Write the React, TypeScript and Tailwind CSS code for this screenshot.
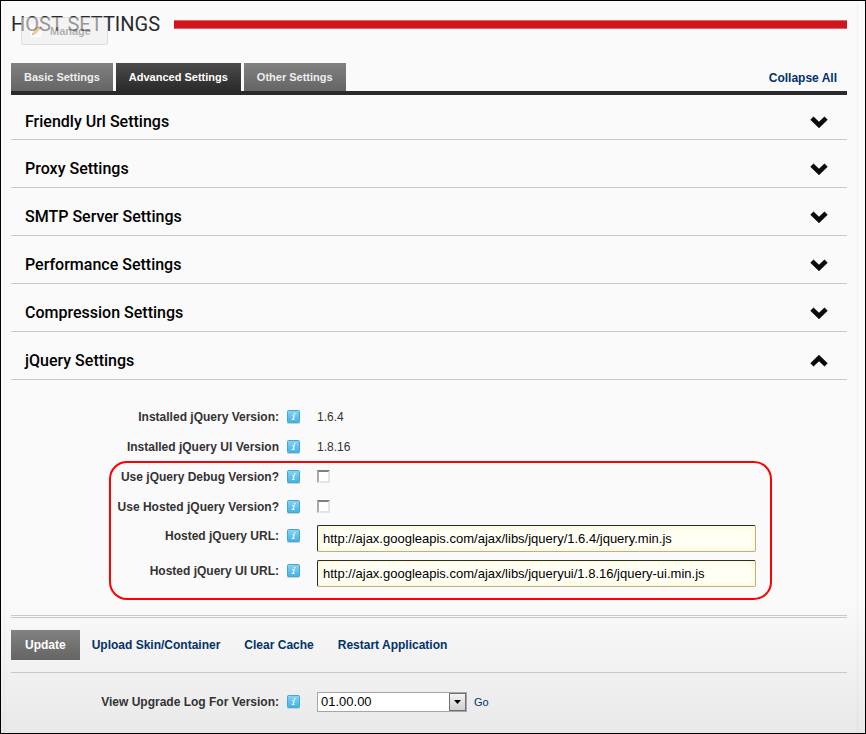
import React, { useState } from "react";

const sections = [
  "Friendly Url Settings",
  "Proxy Settings",
  "SMTP Server Settings",
  "Performance Settings",
  "Compression Settings",
  "jQuery Settings",
];

const tabs = ["Basic Settings", "Advanced Settings", "Other Settings"];

function Chevron({ up }: { up: boolean }) {
  return (
    <svg width="18" height="12" viewBox="0 0 18 12" className={up ? "rotate-180" : ""} aria-hidden="true">
      <path d="M1.9 2.2 9 9l7.100-6.800" fill="none" stroke="#0a0a0a" strokeWidth="4.600" />
    </svg>
  );
}

function InfoIcon() {
  return (
    <svg width="13" height="14" viewBox="0 0 13 14" className="shrink-0" aria-hidden="true">
      <defs>
        <linearGradient id="info" x1="0" y1="0" x2="0" y2="1">
          <stop offset="0" stopColor="#8bd3f2" />
          <stop offset="0.500" stopColor="#62c3ee" />
          <stop offset="1" stopColor="#43b3e6" />
        </linearGradient>
      </defs>
      <rect x="0" y="12" width="13" height="2" rx="1" fill="#c9d3d8" />
      <rect x="0.500" y="0.500" width="12" height="12" rx="1" fill="url(#info)" stroke="#48a5d3" />
      <path d="M7 3h1.600l-.3 1.400H6.700zM5.200 5.200h2.700L7 9h.8l-.2 1H4.600l.2-1h.7l.7-2.900H5z" fill="#fff" opacity=".85" />
    </svg>
  );
}

function Field({
  label,
  id,
  tall,
  children,
}: {
  label: string;
  id: string;
  tall?: boolean;
  children: React.ReactNode;
}) {
  return (
    <div className={tall ? "flex h-[27px] items-start" : "flex h-[30px] items-center"}>
      <div className="flex h-[22px] w-[306px] shrink-0 items-center">
        <label htmlFor={id} className="w-[268px] text-right font-bold whitespace-nowrap text-[#333]">
          {label}
        </label>
        <span className="ml-2">
          <InfoIcon />
        </span>
      </div>
      {children}
    </div>
  );
}

const checkClass =
  "mb-[2px] h-[13px] w-[13px] appearance-none border-2 border-t-[#808080] border-l-[#a9a9a9] border-r-[#e3e3ea] border-b-[#e3e3ea] bg-white checked:bg-[#333]";

const textClass =
  "h-[27px] w-[439px] rounded-[2px] border border-t-[#2b2b2b] border-l-[#2b2b2b] border-r-[#b9b084] border-b-[#b9b084] bg-[#fffff5] px-[5px] text-[13px] text-black shadow-[inset_0_0_6px_#fbf3c4] outline-none";

export default function App() {
  const [open, setOpen] = useState("jQuery Settings");
  return (
    <div className="flex min-h-screen flex-col border border-black bg-[linear-gradient(to_top,#e9e9e9,#fafafa_134px)] pr-[7px] pl-[3px] font-['Liberation_Sans',Arial,sans-serif] text-[12px]">
      <main className="grow border-x border-black/3 pr-[10px] pl-[6px]">
        <header className="relative flex h-[46px] items-center gap-[14px]">
          <h1 className="font-[Roboto,sans-serif] text-[20px] whitespace-nowrap text-[#2b2b2b]">HOST SETTINGS</h1>
          <div className="h-[9px] grow border-y border-[#e0646a] bg-[#d0161c]" />
          <button className="absolute top-4 left-[10px] flex h-7 w-[87px] items-center gap-2 rounded-[2px] border border-[#c8c8c8] bg-[#efefef] pl-2 text-[11px] font-bold text-[#777] opacity-55">
            <svg width="12" height="12" viewBox="0 0 12 12" aria-hidden="true">
              <rect width="12" height="12" fill="#fff" />
              <path d="M2 10l1-3 5-6 3 2-5 6z" fill="#e5a94c" />
              <path d="M8 1l3 2-1 1.500-3-2z" fill="#c66" />
              <path d="M2 10l.5-1.500 1 .9z" fill="#333" />
            </svg>
            Manage
          </button>
        </header>

        <nav className="mt-4 flex items-end border-b-4 border-[#2a2a2a]">
          <div className="flex gap-[3px] text-[11px]">
            {tabs.map((tab) => (
              <button
                key={tab}
                className={
                  tab === "Advanced Settings"
                    ? "h-7 bg-linear-to-b from-[#4c4c4c] to-[#2a2a2a] px-[13px] font-bold text-white"
                    : "h-7 bg-linear-to-b from-[#818181] to-[#656565] px-[13px] font-bold text-[#eee]"
                }
              >
                {tab}
              </button>
            ))}
          </div>
          <a href="#collapse" className="mr-[10px] mb-1 ml-auto font-bold text-[#02326b]">
            Collapse All
          </a>
        </nav>

        <div>
          {sections.map((name) => (
            <h2 key={name} className="h-12 border-b border-[#c9c9c9] first:h-[45px]">
              <button
                onClick={() => setOpen(name)}
                className="flex h-full w-full items-center justify-between pt-[10px] pr-[19px] pl-[14px] font-[Roboto,sans-serif] text-[16px] font-medium text-black"
              >
                {name}
                <Chevron up={open === name} />
              </button>
            </h2>
          ))}
        </div>

        <form className="pt-[22px]" onSubmit={(e) => e.preventDefault()}>
          <Field label="Installed jQuery Version:" id="jq">
            <output id="jq" className="text-[#333]">1.6.4</output>
          </Field>
          <Field label="Installed jQuery UI Version" id="jqui">
            <output id="jqui" className="text-[#333]">1.8.16</output>
          </Field>
          <div className="relative">
            <Field label="Use jQuery Debug Version?" id="debug">
              <input id="debug" type="checkbox" className={checkClass} />
            </Field>
            <Field label="Use Hosted jQuery Version?" id="hosted">
              <input id="hosted" type="checkbox" className={checkClass} />
            </Field>
            <div className="flex flex-col gap-2 pt-[3px]">
              <Field label="Hosted jQuery URL:" id="url" tall>
                <input
                  id="url"
                  type="text"
                  className={textClass}
                  defaultValue="http://ajax.googleapis.com/ajax/libs/jquery/1.6.4/jquery.min.js"
                />
              </Field>
              <Field label="Hosted jQuery UI URL:" id="uiurl" tall>
                <input
                  id="uiurl"
                  type="text"
                  className={textClass}
                  defaultValue="http://ajax.googleapis.com/ajax/libs/jqueryui/1.8.16/jquery-ui.min.js"
                />
              </Field>
            </div>
            <div className="pointer-events-none absolute -top-px -bottom-[13px] left-[98px] w-[663px] rounded-[18px] border-2 border-[#f00]" />
          </div>

          <div className="mt-7 flex items-center border-t-[3px] border-b border-t-[#c9c9c9] border-b-[#c9c9c9] py-3 font-bold text-[#02326b] [border-top-style:double]">
            <button className="h-[30px] bg-linear-to-b from-[#818181] to-[#656565] px-[14px] text-white">Update</button>
            <a href="#upload" className="ml-3">Upload Skin/Container</a>
            <a href="#cache" className="ml-6">Clear Cache</a>
            <a href="#restart" className="ml-6">Restart Application</a>
          </div>

          <div className="mt-[14px]">
            <Field label="View Upgrade Log For Version:" id="log">
              <span className="relative flex">
                <select
                  id="log"
                  className="h-5 w-[150px] appearance-none border border-[#a5a5ad] bg-white pl-[3px] text-[13px] leading-4 text-black"
                >
                  <option>01.00.00</option>
                </select>
                <svg
                  width="17"
                  height="18"
                  viewBox="0 0 17 18"
                  className="pointer-events-none absolute top-px right-px"
                  aria-hidden="true"
                >
                  <defs>
                    <linearGradient id="drop" x1="0" y1="0" x2="0" y2="1">
                      <stop offset="0" stopColor="#f4f4f4" />
                      <stop offset="1" stopColor="#cfcfcf" />
                    </linearGradient>
                  </defs>
                  <rect x="0.500" y="0.500" width="16" height="17" fill="url(#drop)" stroke="#707070" />
                  <path d="M5 7h7l-3.500 4z" fill="#000" />
                </svg>
              </span>
              <a href="#go" className="ml-[7px] text-[11px] text-[#02326b]">Go</a>
            </Field>
          </div>
        </form>
      </main>
    </div>
  );
}
